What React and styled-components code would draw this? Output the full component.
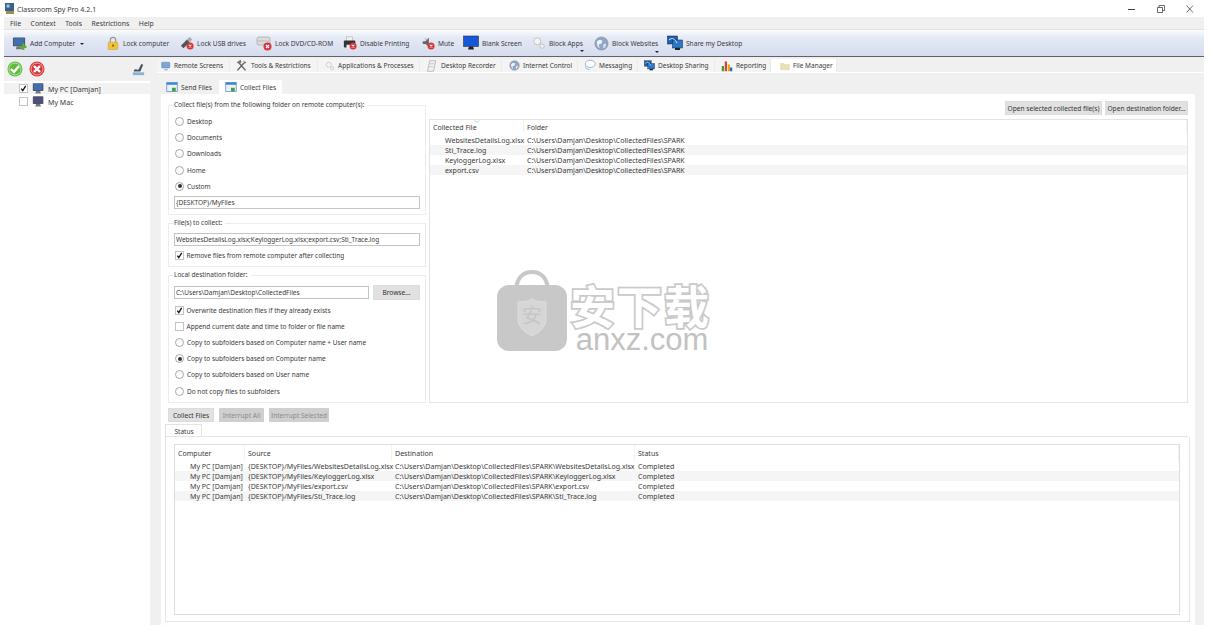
import React from 'react';
import styled, { createGlobalStyle } from 'styled-components';

const GlobalStyle = createGlobalStyle`
  html, body { margin: 0; padding: 0; background: #fff; }
  * { box-sizing: border-box; }
  body {
    font-family: "Noto Sans", "Open Sans", sans-serif;
    font-size: 6.5px;
    color: #3a3a3a;
  }
`;

const Window = styled.div`
  position: relative;
  width: 1211px;
  height: 625px;
  overflow: hidden;
  display: flex;
  flex-direction: column;
  background: #fff;
`;

const TitleBar = styled.div`
  height: 17px;
  display: flex;
  align-items: center;
  padding-left: 5px;
  gap: 2px;
  font-size: 7.05px;
`;

const WinControls = styled.div`
  margin-left: auto;
  display: flex;
  margin-right: 16px;
  gap: 19px;
  color: #444;
`;

const MenuBar = styled.div`
  height: 13px;
  margin: 0 7px 0 4px;
  background: #f0f0f0;
  display: flex;
  align-items: center;
  padding-left: 6px;
  gap: 9.5px;
  font-size: 6.9px;
  border-bottom: 1px solid #e2e2e2;
`;

const Toolbar = styled.div`
  height: 27px;
  margin: 0 7px 0 4px;
  display: flex;
  align-items: center;
  padding-left: 8px;
  font-size: 6.6px;
  background: linear-gradient(#fafcfe 0%, #e4e9f5 30%, #d6dcee 100%);
  border-bottom: 1px solid #5f6268;
`;

const ToolItem = styled.div`
  position: relative;
  width: ${p => p.$w}px;
  flex: none;
  display: flex;
  align-items: center;
  gap: 3px;
  white-space: nowrap;
`;

const DropArrow = styled.span`
  position: absolute;
  right: ${p => p.$right}px;
  bottom: ${p => p.$bottom}px;
  border: 2px solid transparent;
  border-top: 2.5px solid #222;
  border-bottom: 0;
`;

const Main = styled.div`
  flex: 1;
  min-height: 0;
  display: flex;
  margin: 0 7px 0 4px;
  background: #f0f0f0;
`;

const Sidebar = styled.div`
  width: 146px;
  flex: none;
  display: flex;
  flex-direction: column;
`;

const SideHead = styled.div`
  height: 24px;
  display: flex;
  align-items: center;
  padding: 0 4px 0 3px;
  gap: 6px;
`;

const SideList = styled.div`
  flex: 1;
  background: #fff;
  padding-top: 2px;
  font-size: 7.05px;
`;

const TreeRow = styled.div`
  height: 11px;
  margin-bottom: 2px;
  display: flex;
  align-items: center;
  padding-left: 15px;
  gap: 3.5px;
  background: ${p => (p.$selected ? '#f2f2f2' : 'transparent')};
`;

const Box = styled.span`
  width: 9px;
  height: 9px;
  flex: none;
  background: #fff;
  border: 1px solid #c4c4c4;
  display: flex;
  align-items: center;
  justify-content: center;
`;

const Workspace = styled.div`
  flex: 1;
  min-width: 0;
  display: flex;
  flex-direction: column;
  padding-left: 7px;
`;

const TabStrip = styled.div`
  height: 14px;
  margin-top: 2px;
  flex: none;
  display: flex;
  border-bottom: 1px solid #fff;
`;

const MainTab = styled.div`
  width: ${p => p.$w}px;
  flex: none;
  display: flex;
  align-items: center;
  gap: 3px;
  padding-left: ${p => p.$pad}px;
  white-space: nowrap;
  background: ${p => (p.$active ? '#fff' : '#f4f4f4')};
  border-right: 1px solid #ebebeb;
`;

const TabPage = styled.div`
  flex: 1;
  min-height: 0;
  display: flex;
  flex-direction: column;
  margin: 0 9px 0 4px;
`;

const SubTabs = styled.div`
  height: 21px;
  flex: none;
  display: flex;
  align-items: flex-end;
  padding-left: 1px;
  gap: 3px;
  font-size: 6.6px;
`;

const SubTab = styled.div`
  height: 14px;
  width: ${p => p.$w}px;
  display: flex;
  align-items: center;
  justify-content: center;
  gap: 3px;
  background: ${p => (p.$active ? '#fff' : '#f0f0f0')};
`;

const SubPage = styled.div`
  flex: 1;
  min-height: 0;
  background: #fff;
  padding: 7px 7px 0 7px;
  display: flex;
  flex-direction: column;
`;

const Columns = styled.div`
  display: flex;
  height: 302px;
  flex: none;
  gap: 3px;
`;

const FormColumn = styled.div`
  width: 258px;
  flex: none;
  display: flex;
  flex-direction: column;
  gap: 4px;
`;

const Group = styled.fieldset`
  margin: 0;
  padding: ${p => p.$top || 0}px 5px 0 5px;
  height: ${p => p.$h}px;
  flex: none;
  border: 1px solid #ececec;
  min-width: 0;
  display: block;
  legend {
    padding: 0 3px 0 0;
    margin-left: 0;
    line-height: 8px;
  }
`;

const OptionRow = styled.div`
  height: 16.2px;
  display: flex;
  align-items: center;
  gap: 2.5px;
  padding-left: 1px;
  white-space: nowrap;
`;

const TallOptionRow = styled(OptionRow)`
  height: 18px;
`;

const Radio = styled.span`
  width: 9px;
  height: 9px;
  flex: none;
  margin-right: 0.5px;
  border-radius: 50%;
  background: #fff;
  border: 1px solid #a8a8a8;
  display: flex;
  align-items: center;
  justify-content: center;
  &::after {
    content: '';
    width: 4px;
    height: 4px;
    border-radius: 50%;
    background: ${p => (p.$on ? '#333' : 'transparent')};
  }
`;

const FieldRow = styled.div`
  display: flex;
  align-items: center;
  gap: 4px;
  margin-top: ${p => p.$top || 0}px;
  margin-bottom: ${p => p.$bottom || 0}px;
`;

const TextField = styled.div`
  flex: 1;
  height: 13px;
  border: 1px solid #c4c4c4;
  line-height: 11px;
  padding-left: 1px;
  white-space: nowrap;
  overflow: hidden;
`;

const Btn = styled.div`
  height: ${p => p.$h || 14}px;
  width: ${p => p.$w}px;
  flex: none;
  font-size: 6.6px;
  background: ${p => (p.$off ? '#cfcfcf' : '#e1e1e1')};
  color: ${p => (p.$off ? '#8a8a8a' : '#333')};
  border: 1px solid ${p => (p.$off ? '#cfcfcf' : '#dcdcdc')};
  display: flex;
  align-items: center;
  justify-content: center;
  white-space: nowrap;
`;

const RightColumn = styled.div`
  flex: 1;
  min-width: 0;
  display: flex;
  flex-direction: column;
`;

const RightButtons = styled.div`
  height: 15px;
  flex: none;
  display: flex;
  justify-content: flex-end;
  gap: 3px;
`;

const ListBox = styled.div`
  flex: 1;
  min-height: 0;
  margin-top: 3px;
  border: 1px solid #e4e4e4;
  background: #fff;
  font-size: 7.05px;
`;

const ListHead = styled.div`
  height: ${p => p.$h}px;
  margin-bottom: ${p => p.$gap || 0}px;
  display: grid;
  grid-template-columns: ${p => p.$cols};
  align-items: end;
`;

const HeadCell = styled.div`
  position: relative;
  height: 100%;
  display: flex;
  align-items: flex-end;
  padding: 0 0 ${p => p.$pb || 0}px 3px;
  border-right: 1px solid #f2f2f2;
`;

const SortMark = styled.svg`
  position: absolute;
  top: 0;
  left: 44px;
`;

const ListRow = styled.div`
  height: 10px;
  display: grid;
  grid-template-columns: ${p => p.$cols};
  align-items: center;
  background: ${p => (p.$alt ? '#f5f5f5' : '#fff')};
  white-space: nowrap;
`;

const Cell = styled.div`
  padding-left: ${p => p.$indent || 3}px;
`;

const ActionBar = styled.div`
  height: 14px;
  margin-top: 5px;
  flex: none;
  display: flex;
  gap: 5px;
`;

const StatusTabs = styled.div`
  height: 15px;
  margin: 0 0 0 -3px;
  flex: none;
  display: flex;
  align-items: flex-end;
  border-bottom: 1px solid #e4e4e4;
`;

const StatusTab = styled.div`
  width: 37px;
  height: 12px;
  padding: 1.5px 0 0 1px;
  display: flex;
  align-items: center;
  justify-content: center;
  border: 1px solid #e4e4e4;
  border-bottom: 0;
`;

const StatusPanel = styled.div`
  height: 185px;
  margin: 0 -2px 0 -3px;
  flex: none;
  padding: 7px 9px 0 8px;
  border: 1px solid #e4e4e4;
  border-top: 0;
`;

const StatusBox = styled.div`
  height: 171px;
  border: 1px solid #dedede;
  font-size: 7.05px;
`;

const Watermark = styled.div`
  position: absolute;
  left: 497px;
  top: 270px;
  display: flex;
  gap: 3px;
  pointer-events: none;
`;

const WatermarkBag = styled.div`
  position: relative;
  width: 70px;
  height: 82px;
`;

const WatermarkBagMark = styled.span`
  position: absolute;
  left: 25px;
  top: 35px;
  font-family: "Noto Sans CJK SC", sans-serif;
  font-size: 20px;
  line-height: 20px;
  color: #c6c6c6;
`;

const WatermarkText = styled.div`
  display: flex;
  flex-direction: column;
  align-items: center;
  padding-top: 11px;
`;

const WatermarkCjk = styled.div`
  font-family: "Noto Sans CJK SC", sans-serif;
  font-weight: 700;
  font-size: 45px;
  line-height: 47px;
  letter-spacing: 2px;
  color: #fff;
  -webkit-text-stroke: 3.5px #cacaca;
  paint-order: stroke fill;
`;

const WatermarkUrl = styled.div`
  margin-left: 3px;
  font-family: "Liberation Sans", sans-serif;
  font-size: 31px;
  line-height: 23px;
  color: #c2c2c2;
`;

/* small drawings */

const Ico = ({ size = 14, children }) => (
  <svg width={size} height={size} viewBox="0 0 16 16" style={{ flex: 'none' }}>
    {children}
  </svg>
);

const RedX = () => (
  <>
    <circle cx="11.5" cy="11.5" r="4" fill="#d8343a" />
    <path d="M10 10l3 3M13 10l-3 3" stroke="#fff" strokeWidth="1.2" />
  </>
);

const MonitorIcon = ({ size = 15, fill = '#3f6fb5', plus }) => (
  <Ico size={size}>
    <rect x="1" y="1.5" width="13" height="9.5" rx="1" fill="#555" />
    <rect x="2" y="2.5" width="11" height="7.5" fill={fill} />
    <path d="M5 11h5l1 3H4z" fill="#777" />
    {plus && <path d="M12 8v7M8.5 11.5h7" stroke="#62ad2f" strokeWidth="2.4" />}
  </Ico>
);

const LockIcon = () => (
  <Ico>
    <path d="M5 7V4.5a3 3 0 0 1 6 0V7" fill="none" stroke="#999" strokeWidth="1.4" />
    <rect x="2.5" y="7" width="11" height="8.5" rx="1" fill="#efc33f" stroke="#c79b20" strokeWidth=".6" />
    <circle cx="8" cy="11" r="1.3" fill="#8a6c14" />
  </Ico>
);

const UsbIcon = () => (
  <Ico>
    <path d="M1 11l7-7 3 3-7 7z" fill="#555" />
    <path d="M8 4l3-3 3 3-3 3z" fill="#aaa" />
    <RedX />
  </Ico>
);

const DriveIcon = () => (
  <Ico size={16}>
    <rect x="1" y="2" width="13" height="8" rx="2" fill="#dcdcdc" stroke="#a8a8a8" strokeWidth=".7" />
    <path d="M1.5 6h12" stroke="#aaa" strokeWidth=".7" />
    <RedX />
  </Ico>
);

const PrinterIcon = () => (
  <Ico>
    <rect x="4" y="1" width="7" height="5" fill="#f0f0f0" stroke="#999" strokeWidth=".5" />
    <rect x="1" y="5" width="13" height="8" rx="1" fill="#333" />
    <rect x="4" y="10" width="6" height="4" fill="#eee" />
    <RedX />
  </Ico>
);

const MuteIcon = () => (
  <Ico>
    <path d="M2 6h3l4-4v10L5 9H2z" fill="#666" />
    <path d="M4 3l3 1" stroke="#aaa" />
    <RedX />
  </Ico>
);

const ScreenIcon = () => (
  <Ico size={16}>
    <rect x="0.5" y="1" width="15" height="10.5" fill="#1557d8" stroke="#333" strokeWidth=".6" />
    <path d="M6 11.5h4l1 3H5z" fill="#222" />
  </Ico>
);

const AppsIcon = ({ size = 14 }) => (
  <Ico size={size}>
    <circle cx="6" cy="6" r="4" fill="#f4f4f4" stroke="#bcbcbc" />
    <circle cx="11.5" cy="11.5" r="2.5" fill="#f4f4f4" stroke="#bcbcbc" />
  </Ico>
);

const GlobeIcon = ({ size = 15 }) => (
  <Ico size={size}>
    <circle cx="8" cy="8" r="7" fill="#8fa8c8" stroke="#888" strokeWidth=".6" />
    <path d="M3 6c2-2 4-2 6-1l-1 3-3 1 1 4c-2-1-3-4-3-7z" fill="#f0f3f8" />
    <path d="M10 9l3-1-1 4-2 1z" fill="#e4e9f2" />
  </Ico>
);

const ShareIcon = ({ size = 16 }) => (
  <Ico size={size}>
    <rect x="0.5" y="1" width="10" height="8" fill="#1d5fae" stroke="#123" strokeWidth=".5" />
    <rect x="5.5" y="5" width="10" height="8" fill="#2a79c9" stroke="#123" strokeWidth=".5" />
    <path d="M2 5c3-3 6-1 8 3" stroke="#dcecff" fill="none" />
    <path d="M8 13h5v2H8z" fill="#222" />
  </Ico>
);

const ToolsIcon = () => (
  <Ico size={13}>
    <path d="M3 14l8-9M13 14L5 5" stroke="#666" strokeWidth="1.8" />
    <path d="M2 4l5-3 1 3-3 2zM10 2l4 2-2 2z" fill="#777" />
  </Ico>
);

const RecorderIcon = () => (
  <Ico size={12}>
    <path d="M5 1h8l-3 14H2z" fill="#f2f2f2" stroke="#aaa" />
    <path d="M5 5h6M4 9h6" stroke="#bbb" />
  </Ico>
);

const BubbleIcon = () => (
  <Ico size={13}>
    <ellipse cx="9" cy="6" rx="6" ry="4.5" fill="#fff" stroke="#7fa6d8" />
    <path d="M3 9c0 2 2 4 5 4" stroke="#7fa6d8" fill="none" />
  </Ico>
);

const ChartIcon = () => (
  <Ico size={12}>
    <rect x="1" y="8" width="3" height="7" fill="#3f9a3a" />
    <rect x="5" y="2" width="3" height="13" fill="#d8432c" />
    <rect x="9" y="6" width="3" height="9" fill="#e8a22d" />
    <rect x="12" y="10" width="3" height="5" fill="#3566c0" />
  </Ico>
);

const FolderIcon = () => (
  <Ico size={10}>
    <path d="M1 4h5l1 1.5h8V14H1z" fill="#e7e2b4" stroke="#d2cc98" strokeWidth=".6" />
  </Ico>
);

const ScreensIcon = () => (
  <Ico size={10}>
    <rect x="1" y="2" width="13" height="9" rx="1" fill="#7aa7d8" stroke="#6a8fbc" />
    <path d="M5 14h6" stroke="#8aa" strokeWidth="1.5" />
  </Ico>
);

const FilesIcon = () => (
  <Ico size={12}>
    <rect x="1" y="2" width="14" height="12" fill="#e9f1fa" stroke="#5c8fc7" />
    <rect x="1" y="2" width="14" height="3" fill="#3f84cf" />
    <path d="M8 9h5v5H8z" fill="#4aa04a" />
  </Ico>
);

const RoundButton = ({ color, mark }) => (
  <svg width="16" height="16" viewBox="0 0 16 16" style={{ flex: 'none' }}>
    <circle cx="8" cy="8" r="7.5" fill={color} />
    <circle cx="8" cy="8" r="6" fill="none" stroke="#fff" strokeOpacity=".55" />
    <path d={mark} stroke="#fff" strokeWidth="2.4" fill="none" />
  </svg>
);

const PenIcon = () => (
  <svg width="15" height="15" viewBox="0 0 16 16" style={{ marginLeft: 'auto', flex: 'none' }}>
    <path d="M2 11h12v3H2z" fill="#8fb0d6" />
    <path d="M3 9c2-3 3 0 5-1l3-6 2 1-3 7H3z" fill="#4a5560" />
  </svg>
);

const CheckMark = () => (
  <svg width="7" height="7" viewBox="0 0 8 8">
    <path d="M1.5 4.2L3.2 6.5 6.5 1" stroke="#111" strokeWidth="1.5" fill="none" />
  </svg>
);

const AppIcon = () => (
  <svg width="10" height="11" viewBox="0 0 10 11">
    <rect x="0" y="0" width="9" height="8" fill="#33648f" />
    <rect x="1.5" y="1.5" width="3" height="3" fill="#a9c5de" />
    <rect x="1" y="8" width="8" height="3" fill="#a88a4a" />
  </svg>
);

/* data */

const toolItems = [
  { w: 94, label: 'Add Computer', icon: <MonitorIcon plus />, menu: true },
  { w: 74, label: 'Lock computer', icon: <LockIcon /> },
  { w: 76, label: 'Lock USB drives', icon: <UsbIcon /> },
  { w: 87, label: 'Lock DVD/CD-ROM', icon: <DriveIcon /> },
  { w: 78, label: 'Disable Printing', icon: <PrinterIcon /> },
  { w: 42, label: 'Mute', icon: <MuteIcon /> },
  { w: 69, label: 'Blank Screen', icon: <ScreenIcon /> },
  { w: 62, label: 'Block Apps', icon: <AppsIcon />, arrow: 10 },
  { w: 73, label: 'Block Websites', icon: <GlobeIcon />, arrow: 8 },
  { w: 90, label: 'Share my Desktop', icon: <ShareIcon /> },
];

const mainTabs = [
  { w: 73, pad: 4, label: 'Remote Screens', icon: <ScreensIcon /> },
  { w: 88, pad: 5, label: 'Tools & Restrictions', icon: <ToolsIcon /> },
  { w: 102, pad: 7, label: 'Applications & Processes', icon: <AppsIcon size={10} /> },
  { w: 82, pad: 6, label: 'Desktop Recorder', icon: <RecorderIcon /> },
  { w: 76, pad: 7, label: 'Internet Control', icon: <GlobeIcon size={11} /> },
  { w: 60, pad: 5, label: 'Messaging', icon: <BubbleIcon /> },
  { w: 77, pad: 6, label: 'Desktop Sharing', icon: <ShareIcon size={11} /> },
  { w: 56, pad: 6, label: 'Reporting', icon: <ChartIcon /> },
  { w: 66, pad: 9, label: 'File Manager', icon: <FolderIcon />, active: true },
];

const folderOptions = ['Desktop', 'Documents', 'Downloads', 'Home', 'Custom'];

const copyOptions = [
  { label: 'Copy to subfolders based on Computer name + User name' },
  { label: 'Copy to subfolders based on Computer name', on: true },
  { label: 'Copy to subfolders based on User name' },
  { label: 'Do not copy files to subfolders' },
];

const folder = 'C:\\Users\\Damjan\\Desktop\\CollectedFiles\\SPARK';
const collected = ['WebsitesDetailsLog.xlsx', 'Sti_Trace.log', 'KeyloggerLog.xlsx', 'export.csv'];
const statusFiles = ['WebsitesDetailsLog.xlsx', 'KeyloggerLog.xlsx', 'export.csv', 'Sti_Trace.log'];

const collectedCols = '94px 1fr';
const statusCols = '70px 147px 243px 1fr';

export default function App() {
  return (
    <Window>
      <GlobalStyle />
      <TitleBar>
        <AppIcon />
        <span>Classroom Spy Pro 4.2.1</span>
        <WinControls>
          <svg width="10" height="10" viewBox="0 0 10 10">
            <path d="M1 5.5h7" stroke="#444" />
          </svg>
          <svg width="10" height="10" viewBox="0 0 10 10">
            <path d="M1.5 3.5h5v5h-5zM3 3.5v-2h5.5v5h-2" fill="none" stroke="#444" strokeWidth=".8" />
          </svg>
          <svg width="10" height="10" viewBox="0 0 10 10">
            <path d="M1.5 1.5l6.5 7M8 1.5l-6.5 7" stroke="#444" strokeWidth=".8" />
          </svg>
        </WinControls>
      </TitleBar>

      <MenuBar>
        {['File', 'Context', 'Tools', 'Restrictions', 'Help'].map(m => (
          <span key={m}>{m}</span>
        ))}
      </MenuBar>

      <Toolbar>
        {toolItems.map(t => (
          <ToolItem key={t.label} $w={t.w}>
            {t.icon}
            <span>{t.label}</span>
            {t.menu && <DropArrow $right={22} $bottom={6} />}
            {t.arrow && <DropArrow $right={t.arrow} $bottom={-2} />}
          </ToolItem>
        ))}
      </Toolbar>

      <Main>
        <Sidebar>
          <SideHead>
            <RoundButton color="#5dbb3e" mark="M4 8l3 3 5-6" />
            <RoundButton color="#d8343a" mark="M5 5l6 6M11 5l-6 6" />
            <PenIcon />
          </SideHead>
          <SideList>
            <TreeRow $selected>
              <Box><CheckMark /></Box>
              <MonitorIcon size={13} />
              <span>My PC [Damjan]</span>
            </TreeRow>
            <TreeRow>
              <Box />
              <MonitorIcon size={13} fill="#4a4f85" />
              <span>My Mac</span>
            </TreeRow>
          </SideList>
        </Sidebar>

        <Workspace>
          <TabStrip>
            {mainTabs.map(t => (
              <MainTab key={t.label} $w={t.w} $pad={t.pad} $active={t.active}>
                {t.icon}
                <span>{t.label}</span>
              </MainTab>
            ))}
          </TabStrip>

          <TabPage>
            <SubTabs>
              <SubTab $w={54}><FilesIcon /><span>Send Files</span></SubTab>
              <SubTab $w={63} $active><FilesIcon /><span>Collect Files</span></SubTab>
            </SubTabs>

            <SubPage>
              <Columns>
                <FormColumn>
                  <Group $h={114} $top={4.5}>
                    <legend>Collect file(s) from the following folder on remote computer(s):</legend>
                    {folderOptions.map(o => (
                      <OptionRow key={o}>
                        <Radio $on={o === 'Custom'} />
                        <span>{o}</span>
                      </OptionRow>
                    ))}
                    <FieldRow $top={1.5}>
                      <TextField>{'{DESKTOP}/MyFiles'}</TextField>
                    </FieldRow>
                  </Group>

                  <Group $h={48}>
                    <legend>File(s) to collect:</legend>
                    <FieldRow $top={6}>
                      <TextField>WebsitesDetailsLog.xlsx;KeyloggerLog.xlsx;export.csv;Sti_Trace.log</TextField>
                    </FieldRow>
                    <TallOptionRow>
                      <Box><CheckMark /></Box>
                      <span>Remove files from remote computer after collecting</span>
                    </TallOptionRow>
                  </Group>

                  <Group $h={132}>
                    <legend>Local destination folder:</legend>
                    <FieldRow $top={6} $bottom={2}>
                      <TextField>C:\Users\Damjan\Desktop\CollectedFiles</TextField>
                      <Btn $w={47} $h={15}>Browse...</Btn>
                    </FieldRow>
                    <OptionRow>
                      <Box><CheckMark /></Box>
                      <span>Overwrite destination files if they already exists</span>
                    </OptionRow>
                    <OptionRow>
                      <Box />
                      <span>Append current date and time to folder or file name</span>
                    </OptionRow>
                    {copyOptions.map(o => (
                      <OptionRow key={o.label}>
                        <Radio $on={o.on} />
                        <span>{o.label}</span>
                      </OptionRow>
                    ))}
                  </Group>
                </FormColumn>

                <RightColumn>
                  <RightButtons>
                    <Btn $w={97}>Open selected collected file(s)</Btn>
                    <Btn $w={83}>Open destination folder...</Btn>
                  </RightButtons>
                  <ListBox>
                    <ListHead $h={13} $gap={2} $cols={collectedCols}>
                      <HeadCell $pb={1}>
                        <SortMark width="6" height="3" viewBox="0 0 6 3">
                          <path d="M0.5 0.5L3 2.5 5.5 0.5" fill="none" stroke="#bbb" strokeWidth=".7" />
                        </SortMark>
                        Collected File
                      </HeadCell>
                      <HeadCell $pb={1}>Folder</HeadCell>
                    </ListHead>
                    {collected.map((f, i) => (
                      <ListRow key={f} $cols={collectedCols} $alt={i % 2 === 1}>
                        <Cell $indent={15}>{f}</Cell>
                        <Cell>{folder}</Cell>
                      </ListRow>
                    ))}
                  </ListBox>
                </RightColumn>
              </Columns>

              <ActionBar>
                <Btn $w={46}>Collect Files</Btn>
                <Btn $w={45} $off>Interrupt All</Btn>
                <Btn $w={60} $off>Interrupt Selected</Btn>
              </ActionBar>

              <StatusTabs>
                <StatusTab>Status</StatusTab>
              </StatusTabs>
              <StatusPanel>
                <StatusBox>
                  <ListHead $h={16} $cols={statusCols}>
                    <HeadCell $pb={3}>Computer</HeadCell>
                    <HeadCell $pb={3}>Source</HeadCell>
                    <HeadCell $pb={3}>Destination</HeadCell>
                    <HeadCell $pb={3}>Status</HeadCell>
                  </ListHead>
                  {statusFiles.map((f, i) => (
                    <ListRow key={f} $cols={statusCols} $alt={i % 2 === 1}>
                      <Cell $indent={15}>My PC [Damjan]</Cell>
                      <Cell>{`{DESKTOP}/MyFiles/${f}`}</Cell>
                      <Cell>{`${folder}\\${f}`}</Cell>
                      <Cell>Completed</Cell>
                    </ListRow>
                  ))}
                </StatusBox>
              </StatusPanel>
            </SubPage>
          </TabPage>
        </Workspace>
      </Main>

      <Watermark>
        <WatermarkBag>
          <svg width="70" height="82" viewBox="0 0 70 82">
            <path d="M19 18C21 6 27 2 35 2s14 4 16 16" fill="none" stroke="#c8c8c8" strokeWidth="4" />
            <rect x="0" y="15" width="70" height="66" rx="12" fill="#c8c8c8" />
            <path d="M21 32c6 0 11-1 14-3 3 2 8 3 14 3v17c0 9-8 14-14 17-6-3-14-8-14-17z" fill="#d6d6d6" stroke="#dedede" />
          </svg>
          <WatermarkBagMark>安</WatermarkBagMark>
        </WatermarkBag>
        <WatermarkText>
          <WatermarkCjk>安下载</WatermarkCjk>
          <WatermarkUrl>anxz.com</WatermarkUrl>
        </WatermarkText>
      </Watermark>
    </Window>
  );
}
